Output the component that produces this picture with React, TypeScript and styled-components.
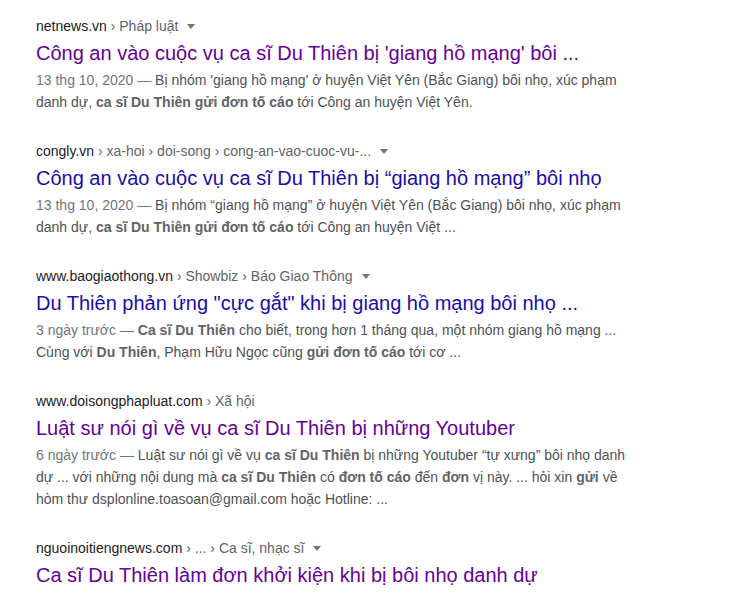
import React from "react";
import styled, { createGlobalStyle } from "styled-components";

const Global = createGlobalStyle`
  html, body { margin: 0; padding: 0; background: #fff; }
  body { font-family: "Liberation Sans", Arial, sans-serif; }
`;

const Page = styled.div`
  padding: 16px 0 0 36px;
  display: flex;
  flex-direction: column;
  gap: 28px;
`;

const Result = styled.div`
  display: flex;
  flex-direction: column;
  max-width: 600px;
`;

const UrlLine = styled.div`
  font-size: 14px;
  line-height: 20px;
  color: #202124;
  white-space: nowrap;
`;

const Crumbs = styled.span`
  color: #5f6368;
`;

const Arrow = styled.span`
  display: inline-block;
  vertical-align: middle;
  margin-left: 9px;
  margin-top: -1px;
  width: 0;
  height: 0;
  border-left: 4px solid transparent;
  border-right: 4px solid transparent;
  border-top: 5px solid #70757a;
`;

const Title = styled.a<{ $visited?: boolean }>`
  display: block;
  margin: 4px 0 3px;
  font-size: 20px;
  line-height: 26px;
  color: ${(p) => (p.$visited ? "#660099" : "#1a0dab")};
  text-decoration: none;
  white-space: nowrap;
`;

const Snippet = styled.div`
  font-size: 14px;
  line-height: 22px;
  color: #4d5156;
  b { font-weight: bold; color: #5f6368; }
`;

const DateText = styled.span`
  color: #70757a;
`;

type R = {
  domain: string;
  crumbs?: string;
  arrow?: boolean;
  title: string;
  visited: boolean;
  date?: string;
  body?: React.ReactNode;
};

const results: R[] = [
  {
    domain: "netnews.vn",
    crumbs: " › Pháp luật",
    arrow: true,
    title: "Công an vào cuộc vụ ca sĩ Du Thiên bị 'giang hồ mạng' bôi ...",
    visited: true,
    date: "13 thg 10, 2020",
    body: (
      <>
        Bị nhóm 'giang hồ mạng' ở huyện Việt Yên (Bắc Giang) bôi nhọ, xúc phạm danh dự,{" "}
        <b>ca sĩ Du Thiên gửi đơn tố cáo</b> tới Công an huyện Việt Yên.
      </>
    ),
  },
  {
    domain: "congly.vn",
    crumbs: " › xa-hoi › doi-song › cong-an-vao-cuoc-vu-...",
    arrow: true,
    title: "Công an vào cuộc vụ ca sĩ Du Thiên bị “giang hồ mạng” bôi nhọ",
    visited: false,
    date: "13 thg 10, 2020",
    body: (
      <>
        Bị nhóm “giang hồ mạng” ở huyện Việt Yên (Bắc Giang) bôi nhọ, xúc phạm danh dự,{" "}
        <b>ca sĩ Du Thiên gửi đơn tố cáo</b> tới Công an huyện Việt ...
      </>
    ),
  },
  {
    domain: "www.baogiaothong.vn",
    crumbs: " › Showbiz › Báo Giao Thông",
    arrow: true,
    title: 'Du Thiên phản ứng "cực gắt" khi bị giang hồ mạng bôi nhọ ...',
    visited: false,
    date: "3 ngày trước",
    body: (
      <>
        <b>Ca sĩ Du Thiên</b> cho biết, trong hơn 1 tháng qua, một nhóm giang hồ mạng ...
        Cùng với <b>Du Thiên</b>, Phạm Hữu Ngọc cũng <b>gửi đơn tố cáo</b> tới cơ ...
      </>
    ),
  },
  {
    domain: "www.doisongphapluat.com",
    crumbs: " › Xã hội",
    arrow: false,
    title: "Luật sư nói gì về vụ ca sĩ Du Thiên bị những Youtuber",
    visited: true,
    date: "6 ngày trước",
    body: (
      <>
        Luật sư nói gì về vụ <b>ca sĩ Du Thiên</b> bị những Youtuber “tự xưng” bôi nhọ danh
        dự ... với những nội dung mà <b>ca sĩ Du Thiên</b> có <b>đơn tố cáo</b> đến{" "}
        <b>đơn</b> vị này. ... hỏi xin <b>gửi</b> về hòm thư dsplonline.toasoan@gmail.com
        hoặc Hotline: ...
      </>
    ),
  },
  {
    domain: "nguoinoitiengnews.com",
    crumbs: " › ... › Ca sĩ, nhạc sĩ",
    arrow: true,
    title: "Ca sĩ Du Thiên làm đơn khởi kiện khi bị bôi nhọ danh dự",
    visited: true,
  },
];

export default function App() {
  return (
    <>
      <Global />
      <Page>
        {results.map((r, i) => (
          <Result key={i}>
            <UrlLine>
              {r.domain}
              {r.crumbs && <Crumbs>{r.crumbs}</Crumbs>}
              {r.arrow && <Arrow />}
            </UrlLine>
            <Title href="#" $visited={r.visited}>
              {r.title}
            </Title>
            {r.body && (
              <Snippet>
                <DateText>{r.date} — </DateText>
                {r.body}
              </Snippet>
            )}
          </Result>
        ))}
      </Page>
    </>
  );
}
